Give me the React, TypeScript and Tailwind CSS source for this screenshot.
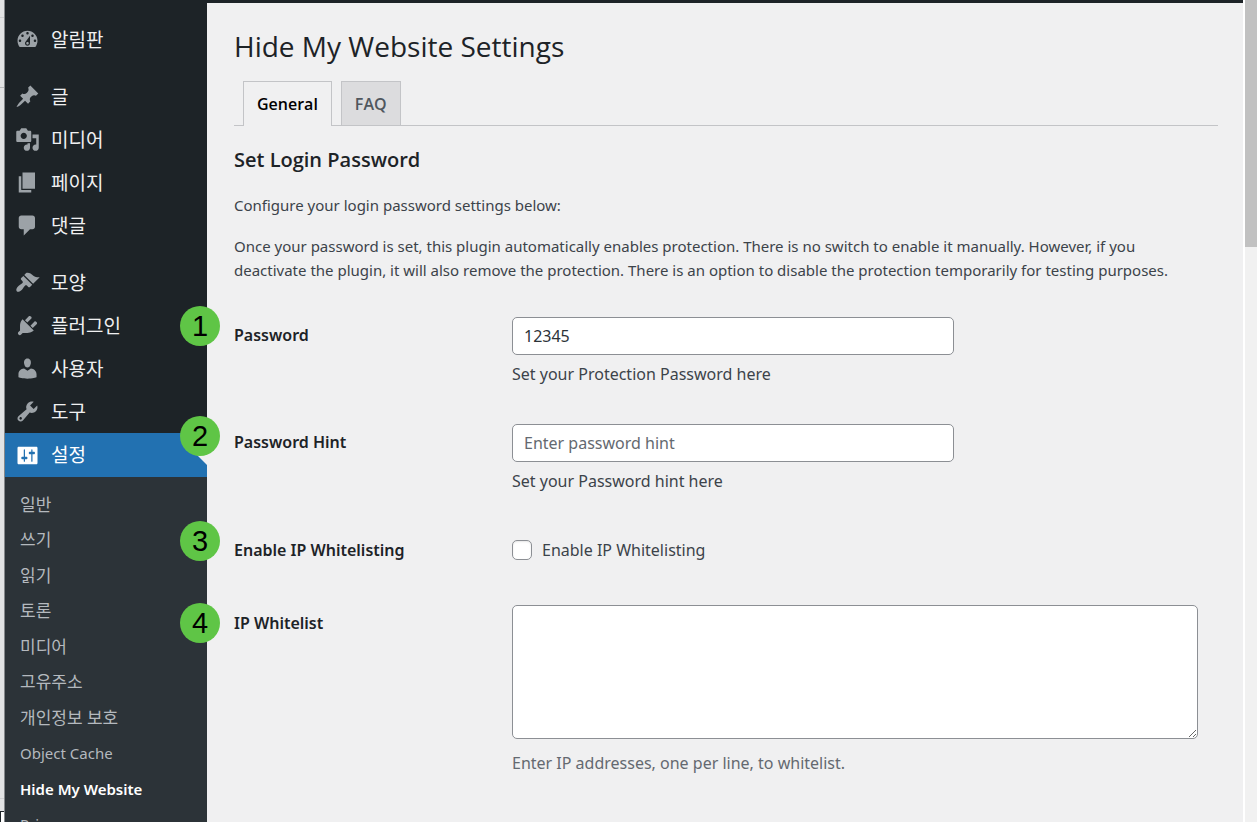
import type { ReactNode } from "react";

interface MenuEntry {
  label: string;
  icon: string;
  active?: boolean;
}

const ICONS = {
  dashboard:
    "M3.76 16h12.48c1.1-1.37 1.76-3.11 1.76-5 0-4.42-3.58-8-8-8s-8 3.58-8 8c0 1.89.66 3.63 1.76 5zM10 4c.55 0 1 .45 1 1s-.45 1-1 1-1-.45-1-1 .45-1 1-1zM6 6c.55 0 1 .45 1 1s-.45 1-1 1-1-.45-1-1 .45-1 1-1zm8 0c.55 0 1 .45 1 1s-.45 1-1 1-1-.45-1-1 .45-1 1-1zm-5.37 5.55L12 7v6c0 1.1-.9 2-2 2s-2-.9-2-2c0-.57.24-1.08.63-1.45zM4 10c.55 0 1 .45 1 1s-.45 1-1 1-1-.45-1-1 .45-1 1-1zm12 0c.55 0 1 .45 1 1s-.45 1-1 1-1-.45-1-1 .45-1 1-1zm-5 3c0-.55-.45-1-1-1s-1 .45-1 1 .45 1 1 1 1-.45 1-1z",
  post: "M10.44 3.02l1.82-1.82 6.36 6.35-1.83 1.82c-1.05-.68-2.48-.57-3.41.36l-.75.75c-.92.93-1.04 2.35-.35 3.41l-1.83 1.82-2.41-2.41-2.8 2.79c-.42.42-3.38 2.71-3.8 2.29s1.86-3.39 2.28-3.81l2.79-2.79L4.1 9.36l1.83-1.82c1.05.69 2.48.57 3.4-.36l.75-.75c.93-.92 1.05-2.35.36-3.41z",
  media:
    "M13 11V4c0-.55-.45-1-1-1h-1.67L9 1H5L3.67 3H2c-.55 0-1 .45-1 1v7c0 .55.45 1 1 1h10c.55 0 1-.45 1-1zM7 4.5c1.38 0 2.5 1.12 2.5 2.5S8.38 9.5 7 9.5 4.5 8.38 4.5 7 5.62 4.5 7 4.5zM14 6h5v10.5c0 1.38-1.12 2.5-2.5 2.5S14 17.88 14 16.5s1.12-2.5 2.5-2.5c.17 0 .34.02.5.05V9h-3V6zm-4 8.05V13h2v3.5c0 1.38-1.12 2.5-2.5 2.5S7 17.88 7 16.5 8.12 14 9.5 14c.17 0 .34.02.5.05z",
  page: "M6 15V2h10v13H6zm-1 1h8v2H3V5h2v11z",
  comments:
    "M5 2h9c1.1 0 2 .9 2 2v7c0 1.1-.9 2-2 2h-2l-5 5v-5H5c-1.1 0-2-.9-2-2V4c0-1.1.9-2 2-2z",
  appearance:
    "M14.48 11.06L7.41 3.99l1.5-1.5c.5-.56 2.3-.47 3.51.32 1.21.8 1.43 1.28 2.91 2.1 1.18.64 2.45 1.26 4.45.85zm-.71.71L6.7 4.7 4.93 6.47c-.39.39-.39 1.02 0 1.41l1.06 1.06c.39.39.39 1.03 0 1.42-.6.6-1.43 1.11-2.21 1.69-.35.26-.7.53-1.01.84C1.43 14.23.4 16.08 1.4 17.07c.99 1 2.84-.03 4.18-1.36.31-.31.58-.66.85-1.02.57-.78 1.08-1.61 1.69-2.21.39-.39 1.02-.39 1.41 0l1.06 1.06c.39.39 1.02.39 1.41 0z",
  plugins:
    "M13.11 4.36L9.87 7.6 8 5.73l3.24-3.24c.35-.34 1.05-.2 1.56.32.52.51.66 1.21.31 1.55zm-8 1.77l.91-1.12 9.01 9.01-1.19.84c-.71.71-2.63 1.16-3.82 1.16H6.14L4.9 17.26c-.59.59-1.54.59-2.12 0-.59-.58-.59-1.53 0-2.12l1.24-1.24v-3.88c0-1.13.4-3.19 1.09-3.89zm7.26 3.97l3.24-3.24c.34-.35 1.04-.21 1.55.31.52.51.66 1.21.31 1.55l-3.24 3.25z",
  users:
    "M10 9.25c-2.27 0-2.73-3.44-2.73-3.44C7 4.02 7.82 2 9.97 2c2.16 0 2.98 2.02 2.71 3.81 0 0-.41 3.44-2.68 3.44zm0 2.57L12.72 10c2.39 0 4.52 2.33 4.52 4.53v2.49s-3.65 1.13-7.24 1.13c-3.65 0-7.24-1.13-7.24-1.13v-2.49c0-2.25 1.94-4.48 4.47-4.48z",
  tools:
    "M16.68 9.77c-1.34 1.34-3.3 1.67-4.95.99l-5.41 6.52c-.99.99-2.59.99-3.58 0s-.99-2.59 0-3.57l6.52-5.42c-.68-1.65-.35-3.61.99-4.95 1.28-1.28 3.12-1.62 4.72-1.06l-2.89 2.89 2.82 2.82 2.86-2.87c.53 1.58.18 3.39-1.08 4.65zM3.81 16.21c.4.39 1.04.39 1.43 0 .4-.4.4-1.04 0-1.43-.39-.4-1.03-.4-1.43 0-.39.39-.39 1.03 0 1.43z",
  settings:
    "M18 16V4c0-.55-.45-1-1-1H3c-.55 0-1 .45-1 1v12c0 .55.45 1 1 1h14c.55 0 1-.45 1-1zM8 11h1c.55 0 1 .45 1 1s-.45 1-1 1H8v1.5c0 .28-.22.5-.5.5s-.5-.22-.5-.5V13H6c-.55 0-1-.45-1-1s.45-1 1-1h1V5.5c0-.28.22-.5.5-.5s.5.22.5.5V11zm5-2h-1c-.55 0-1-.45-1-1s.45-1 1-1h1V5.5c0-.28.22-.5.5-.5s.5.22.5.5V7h1c.55 0 1 .45 1 1s-.45 1-1 1h-1v5.5c0 .28-.22.5-.5.5s-.5-.22-.5-.5V9z",
};

const menuGroups: MenuEntry[][] = [
  [{ label: "알림판", icon: ICONS.dashboard }],
  [
    { label: "글", icon: ICONS.post },
    { label: "미디어", icon: ICONS.media },
    { label: "페이지", icon: ICONS.page },
    { label: "댓글", icon: ICONS.comments },
  ],
  [
    { label: "모양", icon: ICONS.appearance },
    { label: "플러그인", icon: ICONS.plugins },
    { label: "사용자", icon: ICONS.users },
    { label: "도구", icon: ICONS.tools },
    { label: "설정", icon: ICONS.settings, active: true },
  ],
];

const koreanSubmenu = ["일반", "쓰기", "읽기", "토론", "미디어", "고유주소", "개인정보 보호"];

function MenuLink({ entry }: { entry: MenuEntry }) {
  return (
    <li>
      <a
        href="#"
        className={
          entry.active
            ? "relative flex h-11 items-center gap-[11px] bg-[#2271b1] pl-2.5 text-white"
            : "flex h-[43px] items-center gap-[11px] pl-2.5 text-[#f0f0f1]"
        }
      >
        <svg
          viewBox="0 0 20 20"
          aria-hidden="true"
          className={entry.active ? "size-[25px] fill-white" : "size-[25px] fill-[#9ca2a7]"}
        >
          <path d={entry.icon} />
        </svg>
        <span className="text-[19px] leading-6">{entry.label}</span>
        {entry.active ? (
          <span className="absolute top-1/2 right-0 -translate-y-1/2 border-y-10 border-r-10 border-y-transparent border-r-[#f0f0f1]" />
        ) : null}
      </a>
    </li>
  );
}

function Sidebar() {
  return (
    <nav className="flex w-[202px] shrink-0 flex-col bg-[#1d2327] pt-[18px] font-['Open_Sans','Noto_Sans_CJK_KR',sans-serif]">
      <div className="flex flex-col gap-3.5">
        {menuGroups.map((group) => (
          <ul key={group[0].label}>
            {group.map((entry) => (
              <MenuLink key={entry.label} entry={entry} />
            ))}
          </ul>
        ))}
      </div>
      <div className="grow bg-[#2c3338] pt-2.5">
        <ul className="grid h-[355px] grid-rows-10 items-center pl-[15px] text-[15px] leading-6 text-[#b4b9be]">
          {koreanSubmenu.map((label) => (
            <li key={label}>
              <a href="#" className="text-[17px]">
                {label}
              </a>
            </li>
          ))}
          <li className="font-['Noto_Sans',sans-serif]">
            <a href="#">Object Cache</a>
          </li>
          <li className="font-['Noto_Sans',sans-serif]">
            <a href="#" className="font-semibold text-white">
              Hide My Website
            </a>
          </li>
          <li className="font-['Noto_Sans',sans-serif]">
            <a href="#">Privacy</a>
          </li>
        </ul>
      </div>
    </nav>
  );
}

function FormRow({
  id,
  label,
  children,
}: {
  id: string;
  label: string;
  children: ReactNode;
}) {
  return (
    <div className="grid grid-cols-[278px_minmax(0,1fr)]">
      <label htmlFor={id} className="pt-1.5 text-base leading-6 font-semibold text-[#1d2327]">
        {label}
      </label>
      <div className="pr-5">{children}</div>
    </div>
  );
}

function Marker({ children, className }: { children: ReactNode; className: string }) {
  return (
    <span
      className={`absolute left-[180px] flex size-10 items-center justify-center rounded-full bg-[#5fc546] font-['Liberation_Sans',sans-serif] text-[29px] leading-none text-black ${className}`}
    >
      {children}
    </span>
  );
}

const fieldClass =
  "block h-[38px] w-[442px] rounded-[5px] border border-[#8c8f94] bg-white px-[11px] text-base text-[#2c3338] placeholder:text-[#646970]";
const hintClass = "mt-[7px] text-base leading-6 text-[#3c434a]";

export default function App() {
  return (
    <div className="relative flex h-screen overflow-hidden bg-[#f0f0f1] font-['Noto_Sans','Noto_Sans_CJK_KR',sans-serif]">
      <div className="flex w-[5px] shrink-0 flex-col border-r border-[#85888b] bg-[#e2e3e4]">
        <div className="h-[18px] border-b border-[#cfd0d2]" />
        <div className="h-[70px] border-b border-[#b8b9bb]" />
        <div className="grow border-b border-[#cfd0d2]" />
        <div className="h-3" />
        <div className="h-[11px] border-t border-l border-[#1d2327] bg-white" />
      </div>

      <Sidebar />

      <main className="min-w-0 grow border-t-3 border-[#1d2327] pr-[25px] pl-[27px]">
        <h1 className="pt-[23px] font-['Open_Sans',sans-serif] text-[28px] leading-10 text-[#1d2327]">
          Hide My Website Settings
        </h1>

        <div className="mt-[15px] flex gap-[9px] border-b border-[#c3c4c7] pl-[9px] font-['Open_Sans',sans-serif] text-base leading-6 font-semibold">
          <a
            href="#general"
            className="-mb-px border border-b-0 border-[#c3c4c7] bg-[#f0f0f1] px-[13px] py-2.5 text-black"
          >
            General
          </a>
          <a
            href="#faq"
            className="border border-b-0 border-[#c3c4c7] bg-[#dcdcde] px-[13px] pt-2.5 pb-[9px] text-[#50575e]"
          >
            FAQ
          </a>
        </div>

        <h2 className="mt-5 font-['Open_Sans',sans-serif] text-xl leading-7 font-semibold text-[#1d2327]">
          Set Login Password
        </h2>
        <div className="mt-[19px] space-y-[17px] pr-5 text-[15px] leading-6 text-[#3c434a]">
          <p>Configure your login password settings below:</p>
          <p>
            Once your password is set, this plugin automatically enables protection. There is no
            switch to enable it manually. However, if you deactivate the plugin, it will also remove
            the protection. There is an option to disable the protection temporarily for testing
            purposes.
          </p>
        </div>

        <form className="mt-[35px]">
          <FormRow id="password" label="Password">
            <input id="password" type="text" defaultValue="12345" className={fieldClass} />
            <p className={hintClass}>Set your Protection Password here</p>
          </FormRow>
          <div className="mt-[38px]">
            <FormRow id="password-hint" label="Password Hint">
              <input
                id="password-hint"
                type="text"
                placeholder="Enter password hint"
                className={fieldClass}
              />
              <p className={hintClass}>Set your Password hint here</p>
            </FormRow>
          </div>
          <div className="mt-[39px]">
            <FormRow id="enable-whitelist" label="Enable IP Whitelisting">
              <label className="flex items-center gap-2.5 pt-1.5 text-base leading-6 text-[#3c434a]">
                <input
                  id="enable-whitelist"
                  type="checkbox"
                  className="size-5 appearance-none rounded-[5px] border border-[#8c8f94] bg-white shadow-[inset_0_1px_2px_rgba(0,0,0,0.1)]"
                />
                Enable IP Whitelisting
              </label>
            </FormRow>
          </div>
          <div className="mt-[43px]">
            <FormRow id="ip-whitelist" label="IP Whitelist">
              <textarea
                id="ip-whitelist"
                className="block h-[134px] w-full resize rounded-[5px] border border-[#8c8f94] bg-white px-2.5 py-1 text-base text-[#2c3338]"
              />
              <p className="mt-3 text-base leading-6 text-[#646970]">
                Enter IP addresses, one per line, to whitelist.
              </p>
            </FormRow>
          </div>
        </form>
      </main>

      <div className="w-3.5 shrink-0 border-l-2 border-white bg-[#f1f1f1]">
        <div className="h-[30%] bg-[#c1c1c1]" />
      </div>

      <Marker className="top-[306px]">1</Marker>
      <Marker className="top-[416px]">2</Marker>
      <Marker className="top-[521px]">3</Marker>
      <Marker className="top-[603px]">4</Marker>
    </div>
  );
}
